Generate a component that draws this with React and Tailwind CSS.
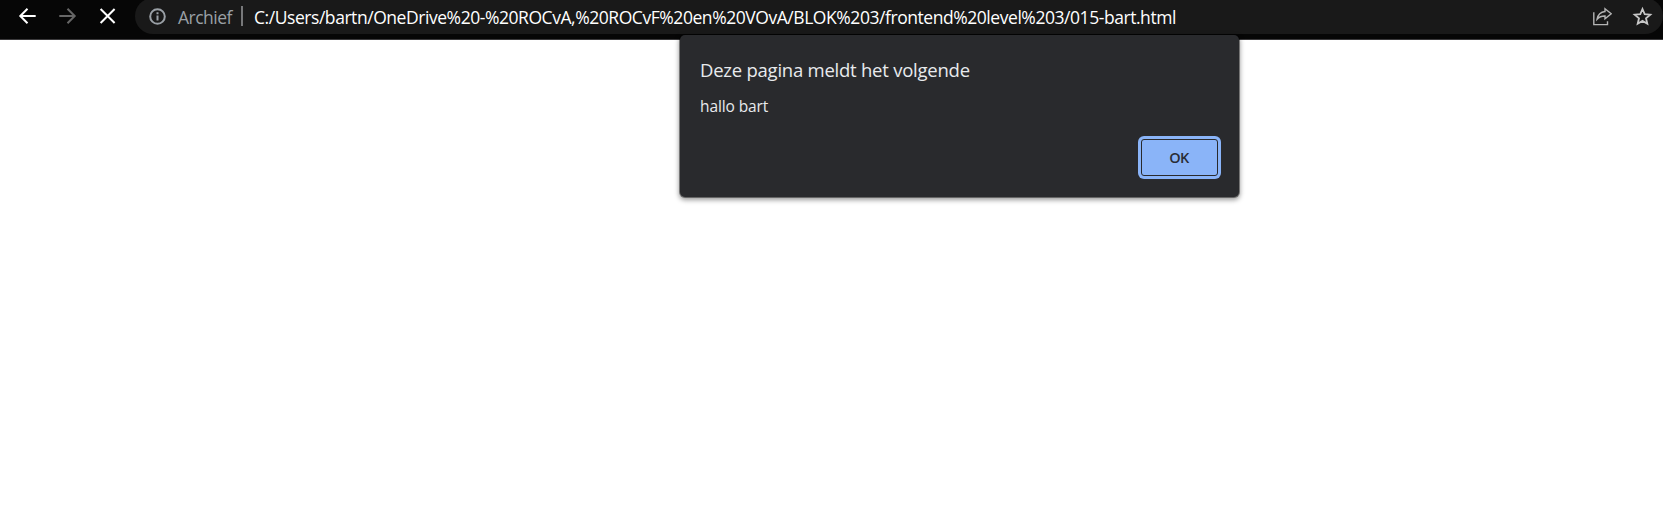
function Toolbar() {
  return (
    <header className="flex h-10 items-start overflow-hidden border-b border-[#3a393b] bg-[#060606]">
      <nav className="flex h-8 w-[135px] shrink-0 items-center pl-[18px] text-white">
        <svg width="20" height="32" viewBox="0 0 20 32" fill="none" stroke="currentColor" strokeWidth="2">
          <path d="M17.7 16H2.5M9.5 8.7 2.3 16l7.2 7.3" />
        </svg>
        <svg className="ml-5 text-[#666666]" width="20" height="32" viewBox="0 0 20 32" fill="none" stroke="currentColor" strokeWidth="2">
          <path d="M1.3 16h15.2M9.5 8.7l7.2 7.3-7.2 7.3" />
        </svg>
        <svg className="ml-5" width="20" height="32" viewBox="0 0 20 32" fill="none" stroke="currentColor" strokeWidth="2">
          <path d="m2.6 9 14 14m0-14-14 14" />
        </svg>
      </nav>
      <div className="-mt-0.5 flex h-9 flex-1 items-center rounded-full bg-[#191919] pl-[14px] pr-[10px]">
        <svg className="shrink-0 text-[#9aa0a6]" width="17" height="17" viewBox="0 0 17 17" fill="none" stroke="currentColor" strokeWidth="2">
          <circle cx="8.5" cy="8.5" r="7.3" />
          <path d="M8.5 7.5v5M8.5 4.3v1.9" />
        </svg>
        <span className="ml-[12px] w-[54px] whitespace-nowrap pt-px text-[17.5px] leading-6 tracking-[-0.5px] text-[#9aa0a6]">Archief</span>
        <span className="ml-[9px] h-5 w-0.5 shrink-0 bg-[#77787a]" />
        <span className="ml-[11px] flex-1 whitespace-nowrap pt-px text-[17.5px] leading-6 tracking-[-0.445px] text-white">
          C:/Users/bartn/OneDrive%20-%20ROCvA,%20ROCvF%20en%20VOvA/BLOK%203/frontend%20level%203/015-bart.html
        </span>
        <svg className="shrink-0 text-[#b4b4b4]" width="20" height="20" viewBox="0 0 20 20" fill="none" stroke="currentColor" strokeWidth="1.4">
          <path d="M1.8 6.3v12.3h13.7v-3.3" />
          <path d="M13 2.8 19.2 7.8l-6.2 4.9V10C9.4 9.9 7 11 5.1 13.2 5.9 8.9 8.5 5.9 13 5.5Z" />
        </svg>
        <svg className="ml-5 shrink-0 text-[#c7c7c7]" width="21" height="20" viewBox="0 0 21 20" fill="none" stroke="currentColor" strokeWidth="1.8">
          <path d="m10.5 3 2.2 5.1 5.6.5-4.3 3.7 1.3 5.4-4.8-2.8-4.8 2.8L7 12.3 2.7 8.6l5.6-.5Z" />
        </svg>
      </div>
    </header>
  );
}

function AlertDialog() {
  return (
    <section
      role="dialog"
      className="absolute left-[680px] top-[35px] flex h-[162px] w-[559px] flex-col rounded-[5px] bg-[#292a2d] pl-5 pr-[18px] shadow-[0_0_0_1px_rgba(0,0,0,0.4),0_2px_5px_1px_rgba(0,0,0,0.4)]"
    >
      <h1 className="mt-[23px] whitespace-nowrap text-[18.5px] leading-6 tracking-[-0.24px] text-[#e8eaed]">Deze pagina meldt het volgende</h1>
      <p className="mt-[14px] text-[15.5px] leading-5 tracking-[-0.1px] text-[#e8eaed]">hallo bart</p>
      <button className="mt-[20px] h-[43px] w-[83px] self-end rounded-[6px] bg-[#8ab4f8] p-[3px] text-[14.5px] font-semibold tracking-[-0.6px] text-[#292d36]">
        <span className="flex h-full items-center justify-center rounded-[3px] border border-[#292a2d] pr-px">OK</span>
      </button>
    </section>
  );
}

export default function App() {
  return (
    <main className="relative h-[522px] w-full overflow-hidden bg-white font-['Open_Sans','Noto_Sans',sans-serif]">
      <Toolbar />
      <AlertDialog />
    </main>
  );
}
